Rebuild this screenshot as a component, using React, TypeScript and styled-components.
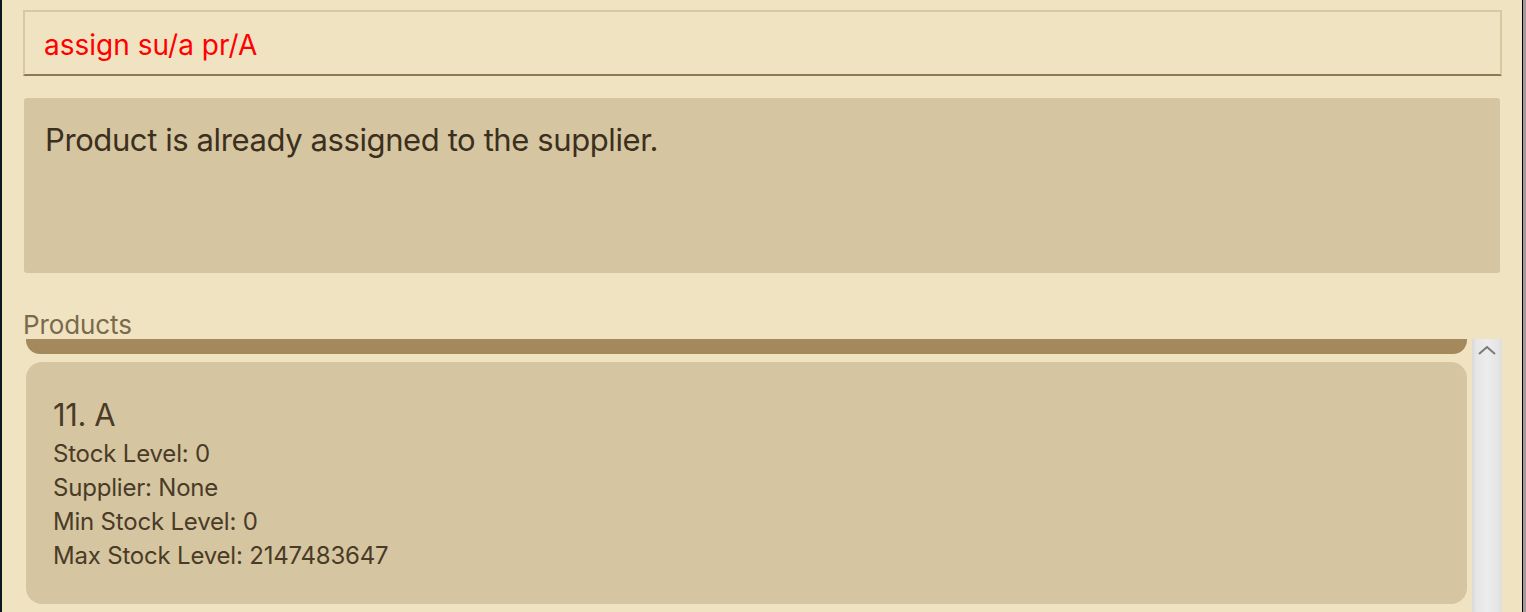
import React from "react";
import styled, { createGlobalStyle } from "styled-components";

const Global = createGlobalStyle`
  html, body { margin: 0; padding: 0; background: #F0E3C1; overflow: hidden; }
  * { box-sizing: border-box; }
`;

const Frame = styled.div`
  display: flex;
  width: 1526px;
  height: 612px;
  overflow: hidden;
  font-family: Inter, "Open Sans", sans-serif;
`;

const LeftEdge = styled.div`
  width: 2px;
  background: #0d1420;
  flex-shrink: 0;
`;

const RightEdge = styled.div`
  width: 4px;
  flex-shrink: 0;
  border-left: 1px solid #000;
  background: #a39a9e;
`;

const Main = styled.div`
  flex: 1;
  display: flex;
  flex-direction: column;
  background: #F0E3C1;
  min-width: 0;
`;

const CommandBox = styled.div`
  margin: 10px 20px 0 21px;
  height: 66px;
  border: 2px solid #D6C9A2;
  border-bottom: 2px solid #8E7A50;
  display: flex;
  align-items: center;
  padding: 4px 0 0 19px;
  color: #ff0000;
  font-size: 28px;
`;

const ResultBox = styled.div`
  margin: 22px 22px 0 22px;
  height: 175px;
  background: #D5C6A1;
  border-radius: 3px;
  padding: 23px 21px;
  color: #3C2F1E;
  font-size: 31px;
  letter-spacing: -0.4px;
`;

const SectionLabel = styled.div`
  margin: 37px 0 0 21px;
  height: 28px;
  color: #7A6A4C;
  font-size: 26px;
  line-height: 30px;
  letter-spacing: -0.1px;
`;

const ListArea = styled.div`
  flex: 1;
  display: flex;
  gap: 5px;
  margin: 1px 20px 0 24px;
  min-height: 0;
`;

const Cards = styled.div`
  flex: 1;
  display: flex;
  flex-direction: column;
  gap: 8px;
  min-width: 0;
`;

const SelectedStub = styled.div`
  height: 15px;
  background: #A3895B;
  border-radius: 0 0 14px 14px;
`;

const Card = styled.div`
  background: #D5C6A1;
  border-radius: 16px;
  height: 242px;
  padding: 34px 27px;
  color: #4A3B27;
  display: flex;
  flex-direction: column;
`;

const CardTitle = styled.div`
  font-size: 31px;
  line-height: 38px;
  letter-spacing: -0.4px;
  margin-bottom: 3px;
`;

const CardLine = styled.div`
  font-size: 24px;
  line-height: 34px;
  letter-spacing: -0.2px;
`;

const Scrollbar = styled.div`
  width: 30px;
  flex-shrink: 0;
  background: linear-gradient(to right, #d9d9d9 0%, #e6e6e6 15%, #ececec 50%, #e6e6e6 85%, #dedede 100%);
  display: flex;
  justify-content: center;
  padding-top: 6px;
`;

const UpArrow = () => (
  <svg width="18" height="10" viewBox="0 0 18 10">
    <path d="M1 9 L9 2 L17 9" fill="none" stroke="#7a7a7a" strokeWidth="2" />
  </svg>
);

export default function App() {
  return (
    <>
      <Global />
      <Frame>
        <LeftEdge />
        <Main>
          <CommandBox>assign su/a pr/A</CommandBox>
          <ResultBox>Product is already assigned to the supplier.</ResultBox>
          <SectionLabel>Products</SectionLabel>
          <ListArea>
            <Cards>
              <SelectedStub />
              <Card>
                <CardTitle>11. A</CardTitle>
                <CardLine>Stock Level: 0</CardLine>
                <CardLine>Supplier: None</CardLine>
                <CardLine>Min Stock Level: 0</CardLine>
                <CardLine>Max Stock Level: 2147483647</CardLine>
              </Card>
            </Cards>
            <Scrollbar>
              <UpArrow />
            </Scrollbar>
          </ListArea>
        </Main>
        <RightEdge />
      </Frame>
    </>
  );
}
